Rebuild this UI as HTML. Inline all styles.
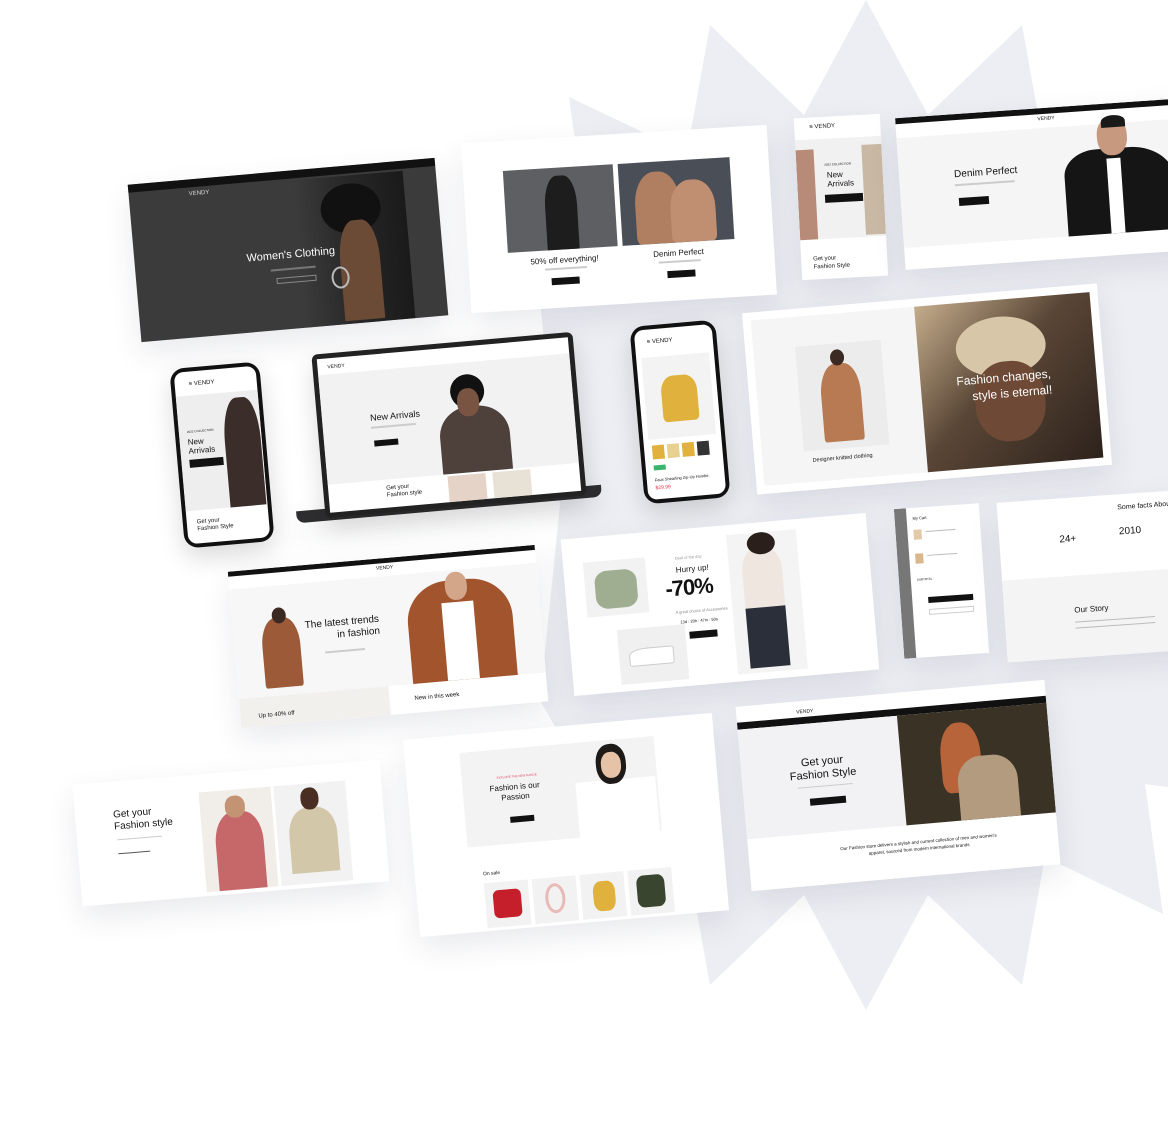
<!DOCTYPE html>
<html><head><meta charset="utf-8">
<style>
*{margin:0;padding:0;box-sizing:border-box}
body{width:1168px;height:1128px;overflow:hidden;background:#fff;font-family:"Liberation Sans",sans-serif;position:relative;color:#111}
.c{position:absolute;background:#fff;box-shadow:0 12px 30px rgba(40,50,80,.10);overflow:hidden}
.c *,.ph *{position:absolute}
.t{white-space:nowrap;color:#111}
.btn{background:#111;height:7px}
.bar{background:#111}
.ph{background:#111;border-radius:14px;position:absolute;box-shadow:0 10px 25px rgba(0,0,0,.15)}
.scr{background:#fff;border-radius:9px;overflow:hidden}
.ln{height:1.5px;background:#bbb}
</style></head><body>
<svg width="1168" height="1128" style="position:absolute;left:0;top:0">
<polygon fill="#eceef3" points="866,0 928,115 1022,25 1045,153 1163,97 1145,226 1275,208 1218,326 1346,349 1256,443 1371,505 1256,567 1346,661 1218,684 1275,802 1145,784 1163,914 1045,857 1022,985 928,895 866,1010 804,895 710,985 687,857 569,914 587,784 540,700 560,505 540,300 587,226 569,97 687,153 710,25 804,115"/>
</svg>

<!-- Card 1 dark -->
<div class="c" style="left:134px;top:171px;width:308px;height:158px;background:#3b3b3b;transform:rotate(-5deg)">
  <div class="bar" style="left:0;top:0;width:308px;height:8px;background:#111"></div>
  <div class="t" style="left:60px;top:12px;font-size:6px;color:#ddd">VENDY</div>
  <div style="left:165px;top:10px;width:110px;height:148px;background:linear-gradient(90deg,#3b3b3b,#2a2a2a 40%,#1a1a1a)"></div>
  <div style="left:190px;top:18px;width:60px;height:50px;border-radius:50%;background:#111"></div>
  <div style="left:205px;top:55px;width:40px;height:100px;border-radius:40% 40% 0 0;background:#6b4a36"></div>
  <div style="left:195px;top:100px;width:18px;height:22px;border-radius:50%;border:2px solid #bbb"></div>
  <div class="t" style="left:112px;top:78px;font-size:11px;color:#fff">Women's Clothing</div>
  <div class="ln" style="left:135px;top:97px;width:45px;background:#777"></div>
  <div style="left:140px;top:106px;width:40px;height:6px;border:1px solid #888"></div>
</div>

<!-- Card 2 -->
<div class="c" style="left:466px;top:134px;width:306px;height:170px;transform:rotate(-3.5deg)">
  <div style="left:40px;top:30px;width:110px;height:82px;background:#5d5f63"></div>
  <div style="left:80px;top:38px;width:32px;height:74px;background:#1d1d1d;border-radius:40% 40% 0 0"></div>
  <div style="left:155px;top:30px;width:112px;height:82px;background:#4a4e57"></div>
  <div style="left:170px;top:40px;width:45px;height:72px;background:#b07f62;border-radius:45% 45% 10% 10%"></div>
  <div style="left:205px;top:50px;width:45px;height:62px;background:#c08e70;border-radius:45% 45% 10% 10%"></div>
  <div class="t" style="left:62px;top:118px;font-size:8px">50% off everything!</div>
  <div class="t" style="left:185px;top:118px;font-size:8px">Denim Perfect</div>
  <div class="ln" style="left:76px;top:130px;width:42px;background:#ccc"></div>
  <div class="ln" style="left:190px;top:130px;width:42px;background:#ccc"></div>
  <div class="btn" style="left:82px;top:140px;width:28px"></div>
  <div class="btn" style="left:198px;top:140px;width:28px"></div>
</div>

<!-- Card 3 narrow mobile -->
<div class="c" style="left:798px;top:116px;width:86px;height:162px;transform:rotate(-3deg)">
  <div class="t" style="left:15px;top:7px;font-size:6px">≡ VENDY</div>
  <div style="left:0;top:22px;width:86px;height:100px;background:#f1f1f1"></div>
  <div style="left:0;top:32px;width:18px;height:90px;background:#b88b78"></div>
  <div style="left:66px;top:30px;width:20px;height:90px;background:#c9b8a4"></div>
  <div class="t" style="left:28px;top:46px;font-size:3px">2022 COLLECTION</div>
  <div class="t" style="left:30px;top:54px;font-size:8px;line-height:9px">New<br>Arrivals</div>
  <div class="btn" style="left:27px;top:78px;width:38px;height:8px"></div>
  <div class="t" style="left:12px;top:138px;font-size:6px;line-height:8px">Get your<br>Fashion Style</div>
</div>

<!-- Card 4 Denim -->
<div class="c" style="left:900px;top:108px;width:290px;height:152px;transform:rotate(-4deg)">
  <div class="bar" style="left:0;top:0;width:290px;height:6px"></div>
  <div class="t" style="left:142px;top:8px;font-size:5px">VENDY</div>
  <div style="left:0;top:20px;width:290px;height:110px;background:#f5f5f5"></div>
  <div class="t" style="left:55px;top:55px;font-size:10px">Denim Perfect</div>
  <div class="ln" style="left:55px;top:70px;width:60px;background:#ccc"></div>
  <div class="btn" style="left:58px;top:84px;width:30px;height:8px"></div>
  <div style="left:165px;top:45px;width:110px;height:85px;background:#151515;border-radius:30% 40% 0 0"></div>
  <div style="left:200px;top:14px;width:30px;height:38px;background:#c79a7f;border-radius:45%"></div>
  <div style="left:205px;top:12px;width:24px;height:12px;background:#1a1a1a;border-radius:50% 50% 0 0"></div>
  <div style="left:208px;top:55px;width:14px;height:75px;background:#fff"></div>
</div>

<!-- Phone 1 -->
<div class="ph" style="left:177px;top:365px;width:90px;height:180px;transform:rotate(-5deg)">
  <div class="scr" style="left:4px;top:4px;width:82px;height:172px">
    <div class="t" style="left:14px;top:10px;font-size:6px">≡ VENDY</div>
    <div style="left:0;top:24px;width:82px;height:115px;background:#eee"></div>
    <div style="left:45px;top:30px;width:36px;height:109px;background:#3b2e2a;border-radius:40% 40% 0 0"></div>
    <div class="t" style="left:8px;top:58px;font-size:3px">2022 COLLECTION</div>
    <div class="t" style="left:8px;top:66px;font-size:8px;line-height:9px">New<br>Arrivals</div>
    <div class="btn" style="left:8px;top:88px;width:34px;height:8px"></div>
    <div class="t" style="left:10px;top:148px;font-size:6px;line-height:7px">Get your<br>Fashion Style</div>
  </div>
</div>

<!-- Laptop -->
<div class="c" style="left:296px;top:498px;width:306px;height:12px;background:#2e2e30;border-radius:0 0 8px 8px;transform:rotate(-5deg)"></div>
<div class="ph" style="left:318px;top:343px;width:262px;height:164px;border-radius:6px;background:#222;transform:rotate(-5deg)">
  <div style="left:5px;top:5px;width:252px;height:154px;background:#fff;overflow:hidden">
    <div class="t" style="left:10px;top:6px;font-size:5px">VENDY</div>
    <div style="left:0;top:16px;width:252px;height:110px;background:#f2f2f2"></div>
    <div class="t" style="left:48px;top:58px;font-size:9px">New Arrivals</div>
    <div class="ln" style="left:48px;top:72px;width:45px;background:#ccc"></div>
    <div class="btn" style="left:50px;top:86px;width:24px;height:6px"></div>
    <div style="left:116px;top:60px;width:70px;height:66px;background:#4e403b;border-radius:45% 45% 0 0"></div>
    <div style="left:130px;top:28px;width:34px;height:34px;border-radius:50%;background:#111"></div>
    <div style="left:136px;top:42px;width:22px;height:28px;background:#7a5443;border-radius:45%"></div>
    <div class="t" style="left:58px;top:132px;font-size:6px;line-height:7px">Get your<br>Fashion style</div>
    <div style="left:120px;top:128px;width:38px;height:26px;background:#e6d3c8"></div>
    <div style="left:165px;top:128px;width:38px;height:26px;background:#e8e1d6"></div>
  </div>
</div>

<!-- Phone 2 -->
<div class="ph" style="left:637px;top:323px;width:86px;height:178px;transform:rotate(-5deg)">
  <div class="scr" style="left:4px;top:4px;width:78px;height:170px">
    <div class="t" style="left:12px;top:10px;font-size:6px">≡ VENDY</div>
    <div style="left:5px;top:28px;width:68px;height:82px;background:#f3f3f3"></div>
    <div style="left:22px;top:48px;width:36px;height:46px;background:#e1b13d;border-radius:35% 35% 12% 12%"></div>
    <div style="left:8px;top:116px;width:12px;height:14px;background:#e1b13d"></div>
    <div style="left:23px;top:116px;width:12px;height:14px;background:#e8d090"></div>
    <div style="left:38px;top:116px;width:12px;height:14px;background:#e1b13d"></div>
    <div style="left:53px;top:116px;width:12px;height:14px;background:#333"></div>
    <div style="left:8px;top:136px;width:12px;height:5px;background:#3ab56c"></div>
    <div class="t" style="left:8px;top:148px;font-size:4px">Faux Shearling Zip-Up Hoodie</div>
    <div class="t" style="left:8px;top:156px;font-size:5px;color:#e2334a">$29.99</div>
  </div>
</div>

<!-- Big card fashion changes -->
<div class="c" style="left:749px;top:298px;width:356px;height:182px;transform:rotate(-4.8deg)">
  <div style="left:8px;top:8px;width:340px;height:166px;background:#f5f5f5"></div>
  <div style="left:50px;top:38px;width:86px;height:105px;background:#ececec"></div>
  <div style="left:72px;top:58px;width:40px;height:78px;background:#b77a52;border-radius:40% 40% 5% 5%"></div>
  <div style="left:84px;top:44px;width:14px;height:16px;background:#3a2a22;border-radius:50%"></div>
  <div class="t" style="left:58px;top:150px;font-size:5.5px">Designer knitted clothing</div>
  <div style="left:172px;top:8px;width:176px;height:166px;background:linear-gradient(135deg,#c4ad8c,#5a4636 45%,#2d221c)"></div>
  <div style="left:210px;top:25px;width:90px;height:60px;background:#d8c6a8;border-radius:50%"></div>
  <div style="left:225px;top:70px;width:70px;height:80px;background:#6e4a36;border-radius:45%"></div>
  <div class="t" style="left:208px;top:78px;font-size:12px;color:#fff;line-height:16px;text-align:right">Fashion changes,<br>&nbsp;&nbsp;&nbsp;style is eternal!</div>
</div>

<!-- Card latest trends -->
<div class="c" style="left:234px;top:558px;width:308px;height:157px;transform:rotate(-5deg)">
  <div class="bar" style="left:0;top:0;width:308px;height:5px"></div>
  <div class="t" style="left:148px;top:7px;font-size:5px">VENDY</div>
  <div style="left:0;top:18px;width:308px;height:110px;background:#f7f7f7"></div>
  <div style="left:28px;top:50px;width:38px;height:70px;background:#9c5a39;border-radius:40% 40% 5% 5%"></div>
  <div style="left:40px;top:40px;width:14px;height:16px;background:#3a2a22;border-radius:50%"></div>
  <div class="t" style="left:72px;top:55px;font-size:10px;line-height:12px;text-align:right">The latest trends<br>in fashion</div>
  <div class="ln" style="left:90px;top:88px;width:40px;background:#ccc"></div>
  <div style="left:175px;top:28px;width:105px;height:100px;background:#a2542d;border-radius:40% 40% 0 0"></div>
  <div style="left:210px;top:50px;width:32px;height:78px;background:#fff"></div>
  <div style="left:215px;top:20px;width:22px;height:28px;background:#d3a68a;border-radius:45%"></div>
  <div style="left:0;top:128px;width:150px;height:29px;background:#f2f0ec"></div>
  <div class="t" style="left:18px;top:144px;font-size:6px">Up to 40% off</div>
  <div class="t" style="left:175px;top:140px;font-size:6px">New in this week</div>
</div>

<!-- Card -70% -->
<div class="c" style="left:567px;top:526px;width:306px;height:157px;transform:rotate(-5deg)">
  <div style="left:20px;top:25px;width:62px;height:55px;background:#f2f2f2"></div>
  <div style="left:30px;top:35px;width:42px;height:38px;background:#9fae91;border-radius:30%"></div>
  <div style="left:48px;top:95px;width:68px;height:55px;background:#f0f0f0"></div>
  <div style="left:58px;top:115px;width:45px;height:18px;background:#fff;border:1px solid #ccc;border-radius:40% 10% 10% 10%"></div>
  <div class="t" style="left:112px;top:26px;font-size:4px;color:#999">Deal of the day</div>
  <div class="t" style="left:112px;top:36px;font-size:8px">Hurry up!</div>
  <div class="t" style="left:100px;top:46px;font-size:22px;font-weight:bold;letter-spacing:-1px">-70%</div>
  <div class="t" style="left:108px;top:80px;font-size:4px;color:#888">A great choice of Accessories</div>
  <div class="t" style="left:112px;top:90px;font-size:4px">13d : 20h : 47m : 50s</div>
  <div class="btn" style="left:120px;top:103px;width:28px;height:7px"></div>
  <div style="left:165px;top:10px;width:70px;height:140px;background:#f4f4f4"></div>
  <div style="left:178px;top:25px;width:40px;height:60px;background:#efe6e0;border-radius:40% 40% 0 0"></div>
  <div style="left:178px;top:85px;width:40px;height:60px;background:#2b2f3a"></div>
  <div style="left:185px;top:10px;width:28px;height:22px;background:#2a1f1a;border-radius:50%"></div>
</div>

<!-- Cart -->
<div class="c" style="left:899px;top:506px;width:85px;height:150px;background:#fff;transform:rotate(-4deg)">
  <div style="left:0;top:0;width:12px;height:150px;background:#777"></div>
  <div class="t" style="left:18px;top:8px;font-size:4px">My Cart</div>
  <div style="left:18px;top:22px;width:8px;height:10px;background:#e4c9a9"></div>
  <div class="ln" style="left:30px;top:24px;width:30px;background:#bbb;height:1px"></div>
  <div style="left:18px;top:46px;width:8px;height:10px;background:#d8b88c"></div>
  <div class="ln" style="left:30px;top:48px;width:30px;background:#bbb;height:1px"></div>
  <div class="t" style="left:18px;top:70px;font-size:3px">SUBTOTAL</div>
  <div class="btn" style="left:28px;top:90px;width:45px;height:6px"></div>
  <div style="left:28px;top:102px;width:45px;height:6px;border:1px solid #ccc"></div>
</div>

<!-- Facts / Our story -->
<div class="c" style="left:1002px;top:496px;width:190px;height:160px;transform:rotate(-4deg)">
  <div class="t" style="left:120px;top:10px;font-size:7px">Some facts About</div>
  <div class="t" style="left:60px;top:36px;font-size:10px">24+</div>
  <div class="t" style="left:120px;top:32px;font-size:10px">2010</div>
  <div style="left:0;top:78px;width:190px;height:82px;background:#f4f4f4"></div>
  <div class="t" style="left:70px;top:108px;font-size:8px">Our Story</div>
  <div class="ln" style="left:70px;top:124px;width:80px;background:#bbb;height:1px"></div>
  <div class="ln" style="left:70px;top:130px;width:80px;background:#bbb;height:1px"></div>
</div>

<!-- Get your fashion style -->
<div class="c" style="left:77px;top:772px;width:308px;height:122px;transform:rotate(-4.7deg)">
  <div class="t" style="left:38px;top:28px;font-size:10px;line-height:12px">Get your<br>Fashion style</div>
  <div class="ln" style="left:40px;top:58px;width:45px;background:#ccc;height:1px"></div>
  <div class="ln" style="left:40px;top:72px;width:32px;background:#555;height:1px"></div>
  <div style="left:125px;top:18px;width:72px;height:100px;background:#f1ede9"></div>
  <div style="left:138px;top:40px;width:48px;height:78px;background:#c6676a;border-radius:40% 40% 0 0"></div>
  <div style="left:150px;top:24px;width:20px;height:22px;background:#c49373;border-radius:45%"></div>
  <div style="left:200px;top:18px;width:72px;height:100px;background:#f2f2f2"></div>
  <div style="left:212px;top:42px;width:48px;height:65px;background:#d2c7a8;border-radius:40% 40% 0 0"></div>
  <div style="left:226px;top:22px;width:18px;height:22px;background:#4a2e22;border-radius:45%"></div>
</div>

<!-- Fashion is our passion -->
<div class="c" style="left:411px;top:726px;width:310px;height:198px;transform:rotate(-5deg)">
  <div style="left:55px;top:18px;width:195px;height:95px;background:#f3f3f3"></div>
  <div class="t" style="left:90px;top:44px;font-size:3px;color:#e24a6a">EXPLORE THE NEW RANGE</div>
  <div class="t" style="left:82px;top:52px;font-size:8px;line-height:10px;text-align:center">Fashion is our<br>Passion</div>
  <div class="btn" style="left:100px;top:86px;width:24px;height:6px"></div>
  <div style="left:168px;top:58px;width:80px;height:55px;background:#fff"></div>
  <div style="left:190px;top:22px;width:30px;height:40px;background:#1e1a18;border-radius:45%"></div>
  <div style="left:195px;top:30px;width:20px;height:26px;background:#e6c3a6;border-radius:45%"></div>
  <div class="t" style="left:68px;top:138px;font-size:5px">On sale</div>
  <div style="left:68px;top:150px;width:44px;height:45px;background:#f2f2f2"></div>
  <div style="left:76px;top:158px;width:28px;height:28px;background:#c51f2b;border-radius:20%"></div>
  <div style="left:116px;top:150px;width:44px;height:45px;background:#f2f2f2"></div>
  <div style="left:128px;top:156px;width:20px;height:30px;border:3px solid #e9b9b5;border-radius:50%"></div>
  <div style="left:164px;top:150px;width:44px;height:45px;background:#f2f2f2"></div>
  <div style="left:176px;top:158px;width:22px;height:30px;background:#e1b13d;border-radius:35%"></div>
  <div style="left:212px;top:150px;width:44px;height:45px;background:#f2f2f2"></div>
  <div style="left:220px;top:156px;width:28px;height:32px;background:#3a4530;border-radius:25%"></div>
</div>

<!-- Get your Fashion Style big -->
<div class="c" style="left:743px;top:693px;width:310px;height:185px;transform:rotate(-5deg)">
  <div class="t" style="left:60px;top:8px;font-size:5px">VENDY</div>
  <div class="bar" style="left:0;top:16px;width:310px;height:7px"></div>
  <div style="left:0;top:23px;width:160px;height:110px;background:#f2f2f4"></div>
  <div class="t" style="left:48px;top:56px;font-size:11px;line-height:13px;text-align:center">Get your<br>Fashion Style</div>
  <div class="ln" style="left:55px;top:86px;width:55px;background:#ccc;height:1px"></div>
  <div class="btn" style="left:66px;top:98px;width:36px;height:7px"></div>
  <div style="left:160px;top:23px;width:150px;height:110px;background:#3a3224"></div>
  <div style="left:200px;top:35px;width:40px;height:70px;background:#b8643a;border-radius:45% 45% 20% 20%"></div>
  <div style="left:215px;top:70px;width:60px;height:63px;background:#b39b80;border-radius:40% 40% 0 0"></div>
  <div class="t" style="left:92px;top:148px;font-size:4.5px">Our Fashion store delivers a stylish and current collection of men and women's</div>
  <div class="t" style="left:120px;top:155px;font-size:4.5px">apparel, sourced from modern international brands</div>
</div>
</body></html>
